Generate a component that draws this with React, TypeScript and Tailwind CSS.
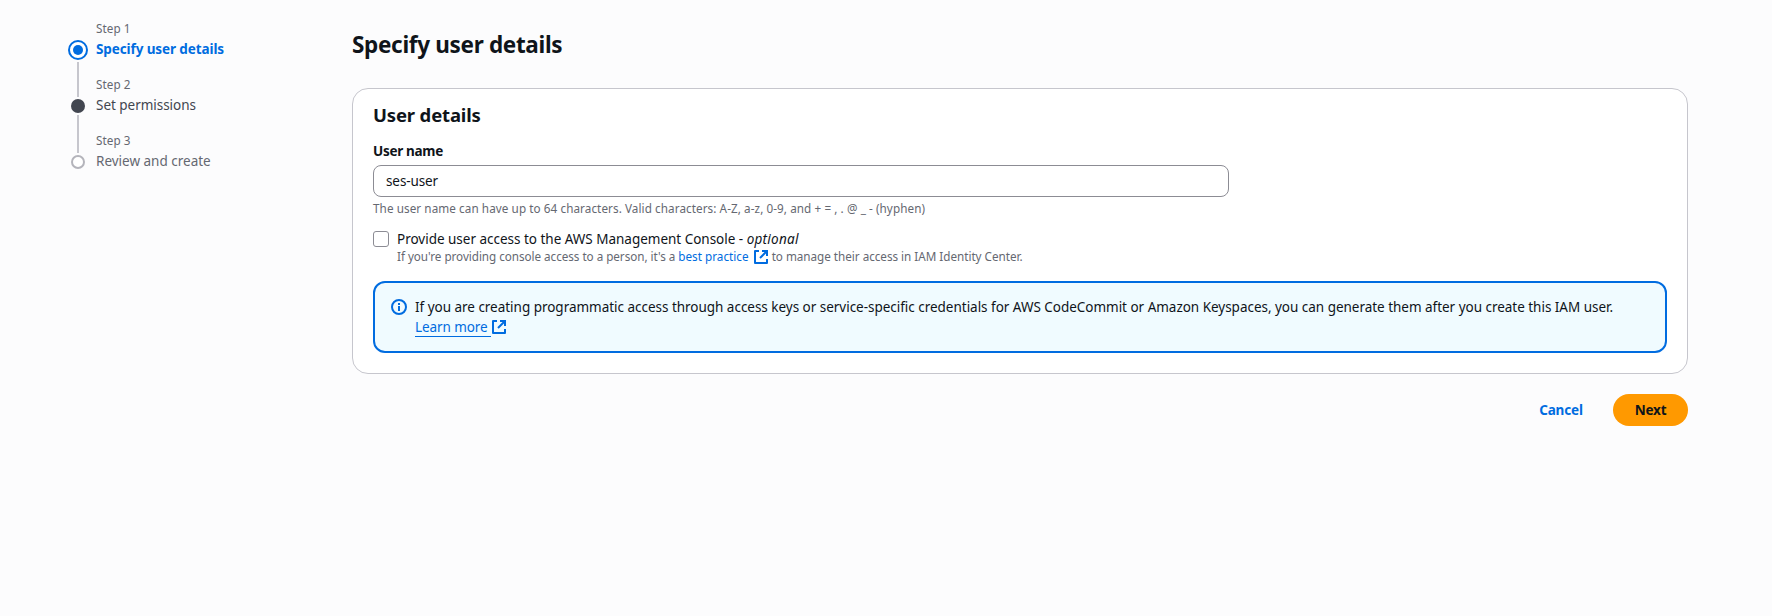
function ExternalIcon({ className = "" }: { className?: string }) {
  return (
    <svg className={`inline-block h-4 w-4 shrink-0 ${className}`} viewBox="0 0 16 16" fill="none" stroke="#006ce0" strokeWidth="2">
      <path d="M6 2H2v12h12v-4" strokeLinejoin="round" />
      <path d="M9 2h5v5" />
      <path d="M7 9 13.5 2.5" />
    </svg>
  );
}

function InfoIcon() {
  return (
    <svg className="h-4 w-4 shrink-0" viewBox="0 0 16 16" fill="none" stroke="#006ce0" strokeWidth="2">
      <circle cx="8" cy="8" r="7" />
      <path d="M8 4v2M8 7v5" />
    </svg>
  );
}

type StepState = "active" | "enabled" | "pending";

function StepMarker({ state }: { state: StepState }) {
  return (
    <svg className="h-5 w-5 shrink-0" viewBox="0 0 20 20" fill="none">
      {state === "active" && (
        <>
          <circle cx="10" cy="10" r="9" stroke="#006ce0" strokeWidth="2" fill="#fff" />
          <circle cx="10" cy="10" r="5" fill="#006ce0" />
        </>
      )}
      {state === "enabled" && <circle cx="10" cy="10" r="7" fill="#424650" />}
      {state === "pending" && <circle cx="10" cy="10" r="6" stroke="#b4b4bb" strokeWidth="2" fill="#fff" />}
    </svg>
  );
}

const steps: { label: string; title: string; state: StepState; titleClass: string; lineClass: string }[] = [
  { label: "Step 1", title: "Specify user details", state: "active", titleClass: "font-bold tracking-[-0.1px] text-[#006ce0]", lineClass: "mt-0.5 h-[35px]" },
  { label: "Step 2", title: "Set permissions", state: "enabled", titleClass: "tracking-[-0.03px] text-[#424650]", lineClass: "-mt-px h-[38px]" },
  { label: "Step 3", title: "Review and create", state: "pending", titleClass: "text-[#656871]", lineClass: "hidden" },
];

function Steps() {
  return (
    <nav className="w-[284px] shrink-0 pt-5">
      {steps.map((step) => (
        <div key={step.label} className="flex h-14 gap-2">
          <div className="flex flex-col items-center pt-5">
            <StepMarker state={step.state} />
            <div className={`w-0.5 shrink-0 bg-[#c6c6cd] ${step.lineClass}`} />
          </div>
          <div>
            <div className="text-[11.7px] leading-4 tracking-[0.05px] text-[#656871]">{step.label}</div>
            <div className={`mt-[3px] leading-5 ${step.titleClass}`}>{step.title}</div>
          </div>
        </div>
      ))}
    </nav>
  );
}

export default function App() {
  return (
    <div className="flex min-h-[616px] w-full bg-[#fcfcfd] pl-[68px] pr-[84px] font-['Noto_Sans',sans-serif] text-[13.5px] leading-5 whitespace-nowrap text-[#0f141a]">
      <Steps />
      <main className="min-w-0 flex-1 pt-[30px]">
        <h1 className="text-[22.5px] leading-[30px] font-bold tracking-[-0.32px]">Specify user details</h1>

        <section className="mt-7 h-[286px] rounded-2xl border border-[#c6c6cd] bg-white px-5 pt-3.5">
          <h2 className="text-[18.5px] leading-6 font-bold tracking-[-0.16px]">User details</h2>
          <label className="mt-3.5 block font-bold tracking-[-0.3px]">User name</label>
          <div className="mt-1 flex h-8 w-[856px] items-center rounded-lg border border-[#8c8c94] bg-white px-3 tracking-[-0.1px]">
            ses-user
          </div>
          <p className="mt-[3px] text-[11.7px] leading-4 tracking-[0.08px] text-[#656871]">
            The user name can have up to 64 characters. Valid characters: A-Z, a-z, 0-9, and + = , . @ _ - (hyphen)
          </p>

          <div className="mt-[13px] flex gap-2">
            <span className="mt-0.5 h-4 w-4 shrink-0 rounded-[3px] border border-[#8c8c94] bg-white" />
            <div>
              <div className="tracking-[-0.015px]">
                Provide user access to the AWS Management Console - <em className="tracking-[0.25px]">optional</em>
              </div>
              <div className="flex h-4 items-start text-[11.7px] leading-[14px] text-[#656871]">
                <span className="tracking-[-0.04px]">If you're providing console access to a person, it's a</span>
                <a className="ml-[3px] tracking-[0.03px] text-[#006ce0]">best practice</a>
                <ExternalIcon className="ml-1" />
                <span className="ml-[3px] tracking-[-0.02px]">to manage their access in IAM Identity Center.</span>
              </div>
            </div>
          </div>

          <div className="mt-4 flex h-[72px] gap-2 rounded-xl border-2 border-[#006ce0] bg-[#f0fbff] pt-3.5 pl-4">
            <div className="pt-0.5">
              <InfoIcon />
            </div>
            <div>
              <div className="tracking-[-0.024px]">
                If you are creating programmatic access through access keys or service-specific credentials for AWS CodeCommit or Amazon
                Keyspaces, you can generate them after you create this IAM user.
              </div>
              <div className="flex items-start">
                <a className="h-5 w-[76px] border-b border-[#006ce0] tracking-[-0.08px] text-[#006ce0]">Learn more</a>
                <ExternalIcon className="mt-0.5" />
              </div>
            </div>
          </div>
        </section>

        <div className="mt-5 flex justify-end gap-[9px] font-bold">
          <button className="h-8 w-[86px] rounded-[20px] tracking-[-0.15px] text-[#006ce0]">Cancel</button>
          <button className="h-8 w-[75px] rounded-[20px] bg-[#ff9900] tracking-[-0.2px] text-[#0f141a]">Next</button>
        </div>
      </main>
    </div>
  );
}
